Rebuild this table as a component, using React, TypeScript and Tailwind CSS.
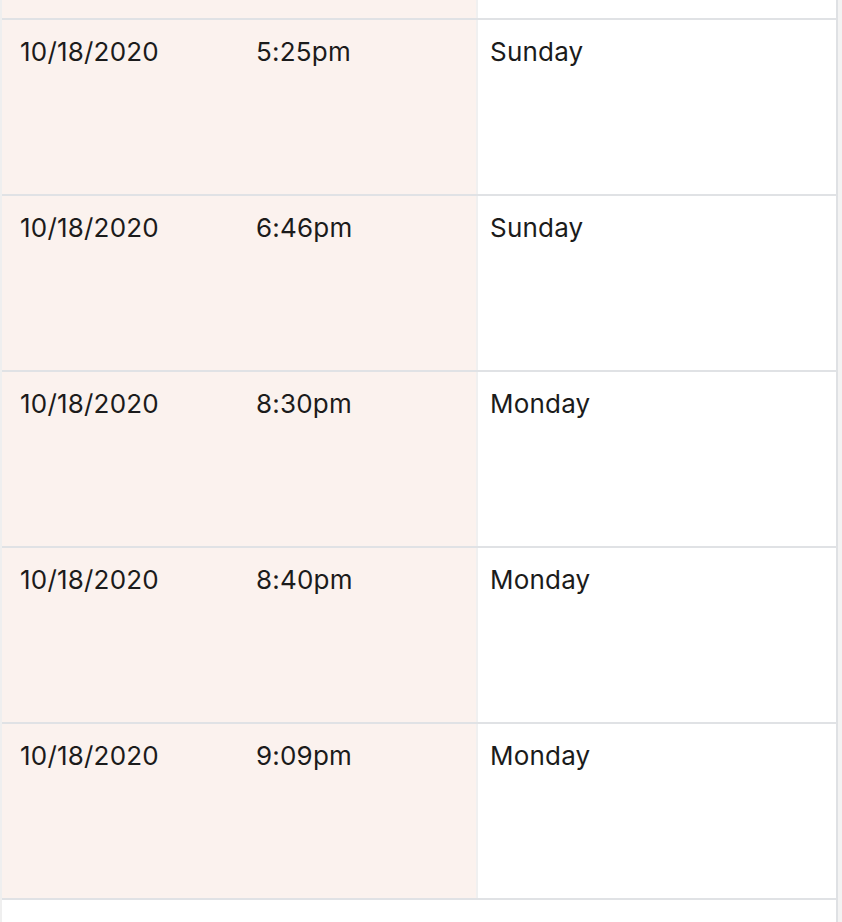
import React from 'react';

const rows = [
  { date: '10/18/2020', time: '5:25pm', day: 'Sunday' },
  { date: '10/18/2020', time: '6:46pm', day: 'Sunday' },
  { date: '10/18/2020', time: '8:30pm', day: 'Monday' },
  { date: '10/18/2020', time: '8:40pm', day: 'Monday' },
  { date: '10/18/2020', time: '9:09pm', day: 'Monday' },
];

const Row = ({ date, time, day }: { date: string; time: string; day: string }) => (
  <div className="flex h-[176px] border-t-2 border-[#e0e2e5]">
    <div className="flex w-[474px] bg-[#fbf2ee]">
      <div className="w-[236px] pl-[18px] pt-[14px]">{date}</div>
      <div className="pl-[18px] pt-[14px]">{time}</div>
    </div>
    <div className="w-[2px] bg-[#f0f0f0]" />
    <div className="flex-1 bg-white pl-[12px] pt-[14px]">{day}</div>
  </div>
);

export default function App() {
  return (
    <div
      className="flex h-[922px] w-[842px] bg-[#f3f3f3] text-[26px] leading-[36px] tracking-[0.2px] text-[#1b1b1b]"
      style={{ fontFamily: 'Inter, "Noto Sans", sans-serif' }}
    >
      <div className="w-[2px] bg-[#efefef]" />
      <div className="flex w-[834px] flex-col bg-white">
        {/* tail of previous row */}
        <div className="flex h-[18px]">
          <div className="w-[474px] bg-[#fbf2ee]" />
          <div className="w-[2px] bg-[#f0f0f0]" />
          <div className="flex-1 bg-white" />
        </div>
        {rows.map((r, i) => (
          <Row key={i} {...r} />
        ))}
        <div className="h-[2px] bg-[#e0e2e5]" />
      </div>
      <div className="w-[2px] bg-[#dfe1e4]" />
      <div className="flex-1 bg-[#f3f3f3]" />
    </div>
  );
}
